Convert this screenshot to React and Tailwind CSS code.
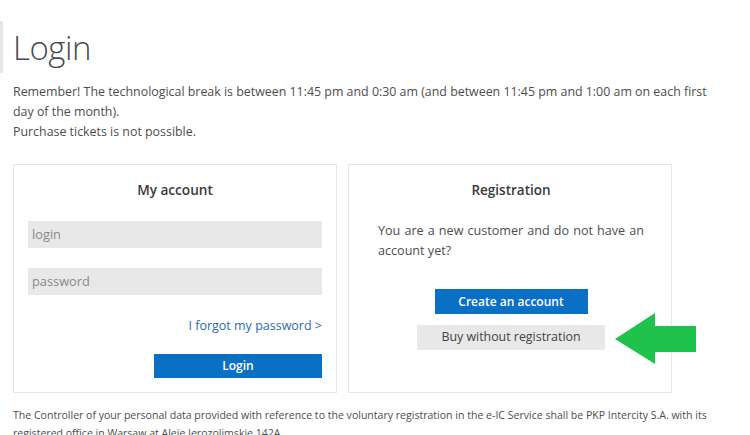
import React from "react";

export default function App() {
  return (
    <div className="w-[750px] h-[435px] overflow-hidden bg-white relative" style={{ fontFamily: '"Open Sans", "Liberation Sans", sans-serif' }}>
      <div className="absolute left-0 top-[21px] w-[3px] h-[52px] bg-[#e6e6e6]" />
      <div className="pl-[13px] pr-[14px] pt-[28px]">
        <h1 className="text-[33px] leading-[40px] font-light text-[#4a4a4a] tracking-[-0.5px]">Login</h1>
        <div className="mt-[14px] w-[700px] text-[12.4px] leading-[20px] text-[#4d4d4d]">
          <p>Remember! The technological break is between 11:45 pm and 0:30 am (and between 11:45 pm and 1:00 am on each first day of the month).</p>
          <p>Purchase tickets is not possible.</p>
        </div>
        <div className="mt-[22px] flex gap-[11px]">
          <div className="w-[324px] shrink-0 h-[229px] border border-[#e6e6e6] px-[14px] pt-[14px] flex flex-col">
            <h2 className="text-center text-[13.6px] font-semibold text-[#3a3a3a] leading-[22px]">My account</h2>
            <div className="mt-[20px] h-[27px] bg-[#e8e8e8] px-[4px] flex items-center text-[12.8px] text-[#8a8a8a]">login</div>
            <div className="mt-[20px] h-[27px] bg-[#e8e8e8] px-[4px] flex items-center text-[12.8px] text-[#8a8a8a]">password</div>
            <div className="mt-[21px] text-right text-[12.5px] leading-[20px] text-[#2b6cb0]">I forgot my password &gt;</div>
            <div className="mt-[18px] flex justify-end">
              <div className="w-[168px] h-[24px] bg-[#0a70c6] text-white text-[12px] font-semibold flex items-center justify-center">Login</div>
            </div>
          </div>
          <div className="w-[324px] shrink-0 h-[229px] border border-[#e6e6e6] pl-[29px] pr-[27px] pt-[14px] flex flex-col">
            <h2 className="text-center text-[13.5px] font-semibold text-[#3a3a3a] leading-[22px]">Registration</h2>
            <p className="mt-[20px] text-[12.6px] leading-[20px] text-[#4d4d4d] text-justify">You are a new customer and do not have an account yet?</p>
            <div className="mt-[28px] flex flex-col items-center">
              <div className="w-[153px] h-[25px] bg-[#0a70c6] text-white text-[12px] font-semibold flex items-center justify-center">Create an account</div>
              <div className="mt-[11px] w-[188px] h-[25px] bg-[#e8e8e8] text-[#444] text-[12.4px] flex items-center justify-center">Buy without registration</div>
            </div>
          </div>
        </div>
        <div className="mt-[13px] w-[715px] text-[10.55px] leading-[18px] text-[#4d4d4d]">
          The Controller of your personal data provided with reference to the voluntary registration in the e-IC Service shall be PKP Intercity S.A. with its registered office in Warsaw at Aleje Jerozolimskie 142A.
        </div>
      </div>
      <svg className="absolute left-[614px] top-[312px]" width="84" height="52" viewBox="0 0 84 52">
        <polygon points="1,27 41,1 41,14 82,14 82,40 41,40 41,52" fill="#1fc24a" />
      </svg>
    </div>
  );
}
